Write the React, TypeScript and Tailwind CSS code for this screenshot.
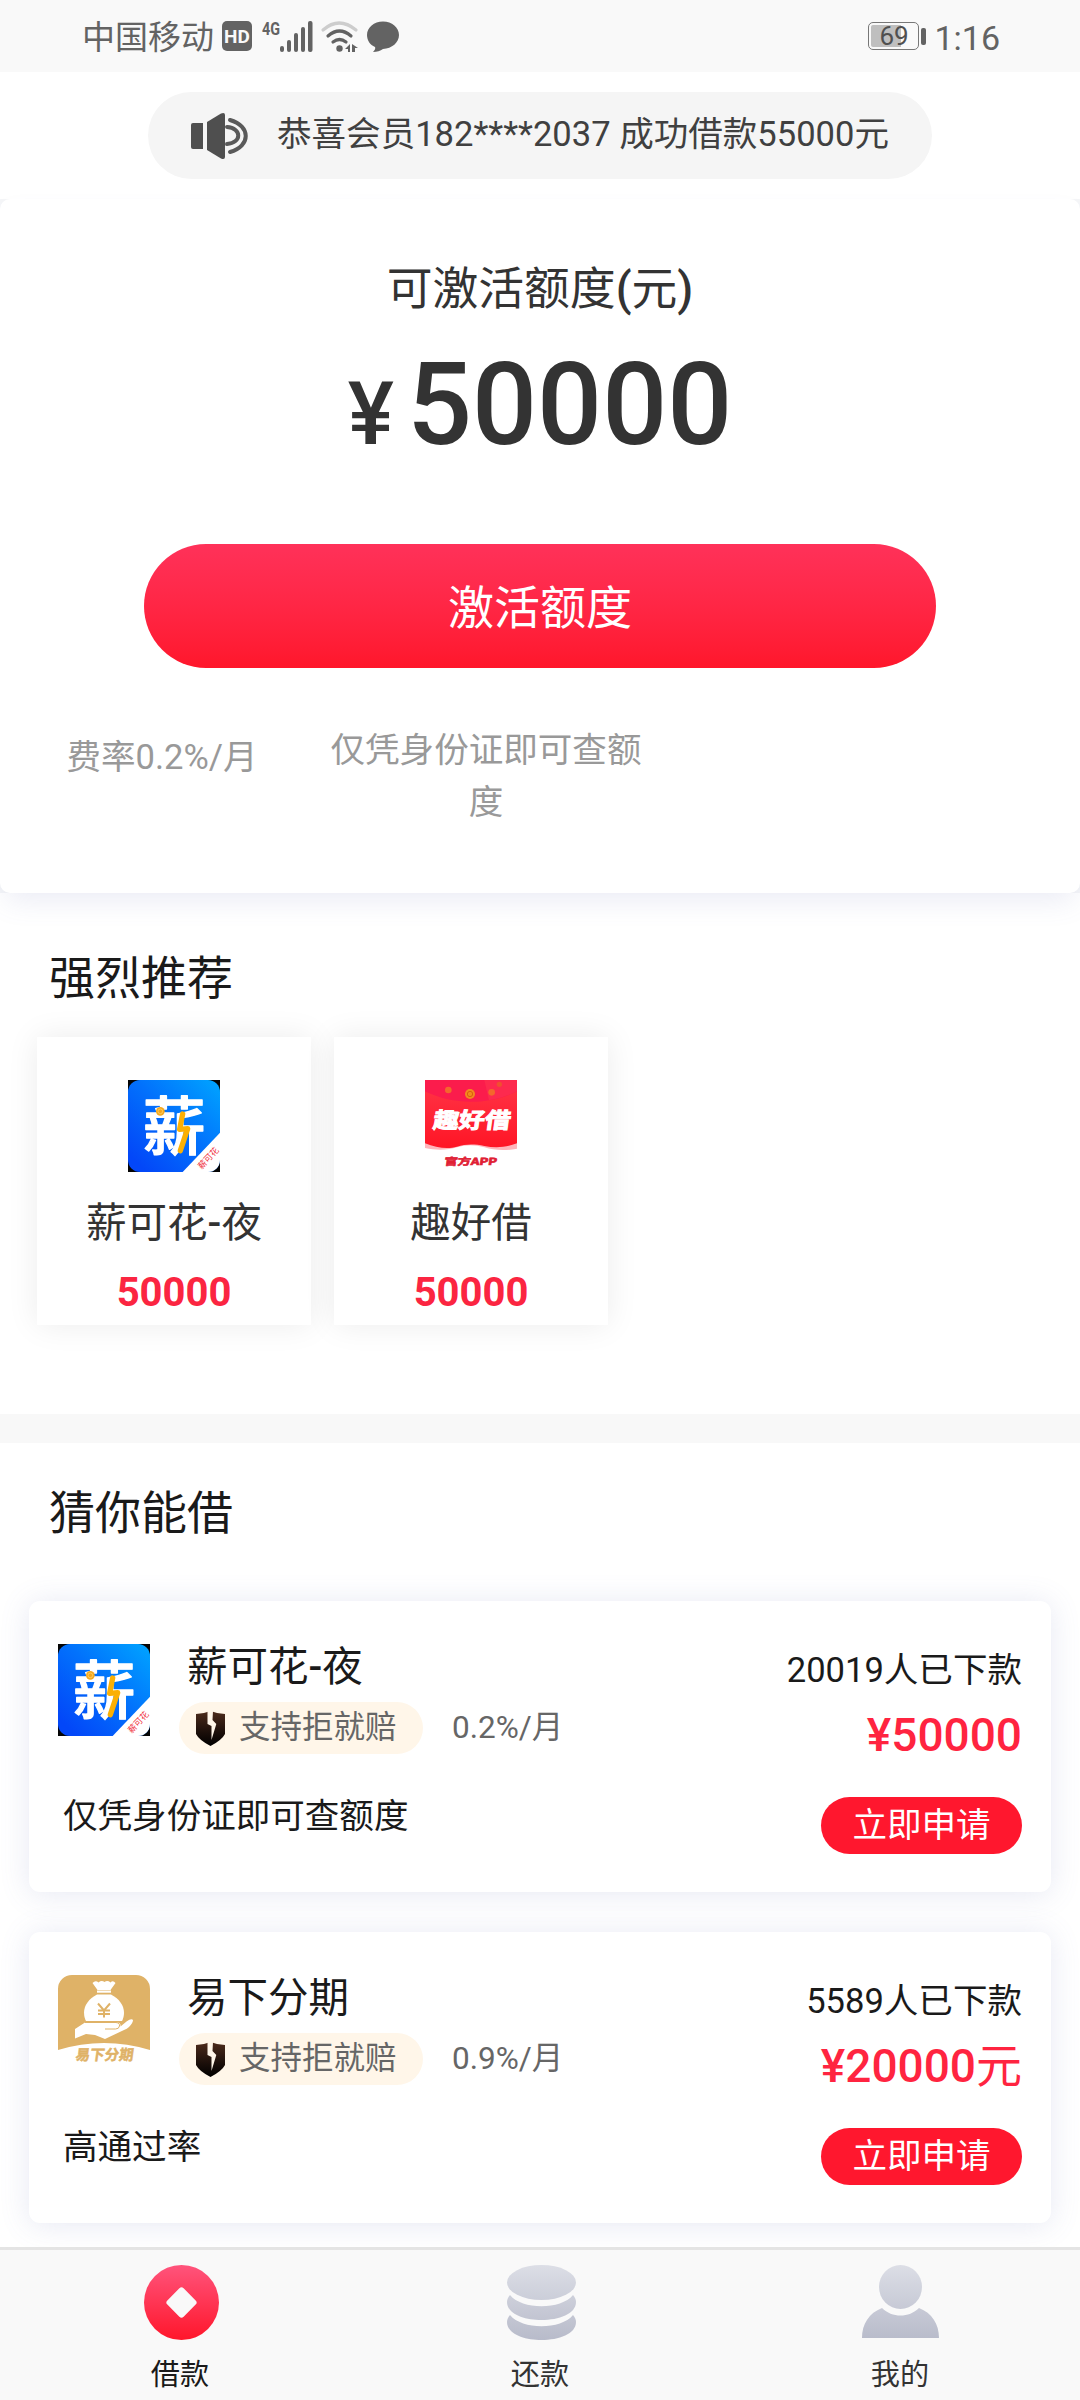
interface Loan {
  id: string
  name: string
  rate: string
  desc: string
  count: string
  amount: string
}

const loans: Loan[] = [
  { id: "xin", name: "薪可花-夜", rate: "0.2%/月", desc: "仅凭身份证即可查额度", count: "20019人已下款", amount: "¥50000" },
  { id: "yi", name: "易下分期", rate: "0.9%/月", desc: "高通过率", count: "5589人已下款", amount: "¥20000元" },
]

const recommended = [
  { id: "xin", name: "薪可花-夜", amount: "50000" },
  { id: "qu", name: "趣好借", amount: "50000" },
]

// Latin characters are set in medium weight, Chinese stays regular
function Mixed({ text }: { text: string }) {
  return (
    <>
      {text.split(/([\x20-\x7e¥]+)/).map((part, i) => (
        <span key={i} className={i % 2 ? "font-medium" : "font-normal"}>
          {part}
        </span>
      ))}
    </>
  )
}

function XinLogo() {
  return (
    <svg viewBox="0 0 276 276" className="block w-[92px] h-[92px] overflow-visible">
      <defs>
        <linearGradient id="xinBg" x1="1" y1="0" x2="0.1" y2="0.9">
          <stop offset="0" stopColor="#00a5ff" />
          <stop offset="0.5" stopColor="#0272fc" />
          <stop offset="1" stopColor="#0347f8" />
        </linearGradient>
        <clipPath id="xinClip">
          <rect width="276" height="276" rx="36" />
        </clipPath>
      </defs>
      <rect width="276" height="276" fill="#050505" />
      <g clipPath="url(#xinClip)">
        <rect width="276" height="276" fill="url(#xinBg)" />
        <path d="M276 158v118H164z" fill="#fff" />
      </g>
      <text
        x="138"
        y="207"
        fontSize="188"
        fontWeight="500"
        fill="#fff"
        stroke="#fff"
        strokeWidth="4"
        strokeLinejoin="round"
        textAnchor="middle"
        className="font-['Noto_Sans_CJK_SC',sans-serif]"
      >
        薪
      </text>
      <path d="M164 102l-9 46 24-2-22 66" fill="none" stroke="#fbb004" strokeWidth="16" strokeLinejoin="round" strokeLinecap="round" />
      <circle cx="97" cy="94" r="13" fill="#f5a81c" />
      <circle cx="97" cy="94" r="7" fill="none" stroke="#ffd978" strokeWidth="2" />
      <text
        transform="translate(221 269) rotate(-47)"
        fontSize="26"
        fill="#f0303c"
        className="font-['Noto_Sans_CJK_SC',sans-serif]"
      >
        薪可花
      </text>
    </svg>
  )
}

function QuLogo() {
  return (
    <svg viewBox="0 0 276 276" className="block w-[92px] h-[92px] overflow-visible">
      <defs>
        <linearGradient id="quBg" x1="0" y1="0" x2="0" y2="1">
          <stop offset="0" stopColor="#ff3548" />
          <stop offset="1" stopColor="#ff1525" />
        </linearGradient>
      </defs>
      <rect width="276" height="276" fill="#fff" />
      <path d="M0 186h276v20c-40 8-70 4-98-4s-56-8-82 0-60 10-96 2z" fill="#ffb5bb" />
      <path d="M0 0h276v190c-36 14-68 14-98 8s-56-6-82 2-62 4-96-10z" fill="url(#quBg)" />
      <path d="M0 0h276v34C190 76 86 76 0 34z" fill="#fb1c4c" />
      <path d="M178 0h98v34q-40 20-84 27z" fill="#fd2a4e" />
      <circle cx="135" cy="42" r="15" fill="#f28a1e" />
      <circle cx="135" cy="42" r="8" fill="none" stroke="#d9600f" strokeWidth="3" />
      <circle cx="70" cy="30" r="10" fill="#f4672c" />
      <circle cx="200" cy="37" r="10" fill="#f4672c" />
      <circle cx="223" cy="13" r="8" fill="#f0502f" />
      <text
        transform="translate(22 144) skewX(-8)"
        fontSize="65"
        fontWeight="700"
        textLength="232"
        lengthAdjust="spacingAndGlyphs"
        fill="#fff"
        stroke="#fff"
        strokeWidth="3"
        className="font-['Noto_Sans_CJK_SC',sans-serif]"
      >
        趣好借
      </text>
      <text
        transform="translate(57 254) skewX(-8)"
        fontSize="29"
        fontWeight="700"
        textLength="158"
        lengthAdjust="spacingAndGlyphs"
        fill="#e02034"
        stroke="#e02034"
        strokeWidth="2"
        className="font-['Noto_Sans_CJK_SC',sans-serif]"
      >
        官方APP
      </text>
    </svg>
  )
}

function YiLogo() {
  return (
    <svg viewBox="0 0 92 92" className="block w-[92px] h-[92px] overflow-visible">
      <path d="M14 0h64a14 14 0 0 1 14 14v61Q46 61 0 75V14A14 14 0 0 1 14 0z" fill="#dfb267" />
      <path d="M34.500 8q3-3 6-.5 3-2.500 6-.5 3-2 6 .5 2.500-2.500 5 .5l-5 7h-13z" fill="#fff" />
      <path d="M39 15.500h14v2.200H39z" fill="#fff" />
      <path d="M39 19.500h14c8 4 13 11 13 18 0 4-1 6.500-2 8.500H28c-1-2-2-4.500-2-8.500 0-7 5-14 13-18z" fill="#fff" />
      <path d="M17 54l10-6.500h32q4 0 3.500 4l6-5q5-3.500 6.500-1.500 0 3-4 7-2 2-5 3L47 64l-10-4-9-1-11 4.500z" fill="#fff" />
      <path d="M27 47.500h31q4 .5 3.500 3.500-.5 3-4 3H47" fill="none" stroke="#dfb267" strokeWidth="1" />
      <path d="M40 28.500l6 7 6-7M46 35v7.500M40 35.500h12M40 39h12" fill="none" stroke="#dfb267" strokeWidth="2" />
      <text
        transform="translate(17 85) skewX(-8)"
        fontSize="14.500"
        fontWeight="700"
        fill="#dfb267"
        stroke="#dfb267"
        strokeWidth="0.500"
        className="font-['Noto_Sans_CJK_SC',sans-serif]"
      >
        易下分期
      </text>
    </svg>
  )
}

function Logo({ id }: { id: string }) {
  if (id === "xin") return <XinLogo />
  if (id === "qu") return <QuLogo />
  return <YiLogo />
}

function ShieldIcon() {
  return (
    <svg viewBox="0 0 29 35" className="block w-[29px] h-[35px]">
      <defs>
        <linearGradient id="shield" x1="0" y1="0" x2="0" y2="1">
          <stop offset="0" stopColor="#4e2c1c" />
          <stop offset="0.6" stopColor="#1c0f0a" />
          <stop offset="1" stopColor="#000" />
        </linearGradient>
      </defs>
      <path d="M0 3q7 0 14.500-3Q22 3 29 3v20q-3 6-14.500 12Q3 29 0 23z" fill="url(#shield)" />
      <path d="M11.500 0h5.500l-.5 9 3.800 4-4.800 16v-14l-4-2z" fill="#fff6e9" />
    </svg>
  )
}

function StatusBar() {
  return (
    <div className="h-[72px] shrink-0 bg-[#f9f9f9] flex items-center pl-[82px] pr-[80px] text-[#636363]">
      <span className="text-[33px] leading-[44px] mt-[4px]">中国移动</span>
      <span className="ml-[8px] w-[30px] h-[30px] rounded-[5px] bg-[#636363] text-[#f9f9f9] text-[19px] leading-[31px] font-bold text-center">HD</span>
      <svg viewBox="0 0 140 32" className="ml-[8px] w-[140px] h-[32px] overflow-visible">
        <text x="2" y="15" fontSize="19" fontWeight="700" textLength="18" lengthAdjust="spacingAndGlyphs" fill="#636363">4G</text>
        <g fill="#636363">
          <rect x="20" y="26" width="4" height="6" rx="2" />
          <rect x="27" y="20" width="4" height="12" rx="2" />
          <rect x="34" y="13" width="4" height="19" rx="2" />
          <rect x="41" y="7" width="4" height="25" rx="2" />
          <rect x="48" y="1" width="4.500" height="31" rx="2" />
        </g>
        <g fill="none" strokeWidth="3.200" strokeLinecap="round">
          <path d="M63 10q16-14 33 0" stroke="#cdcdcd" />
          <path d="M68 16q11.500-10 23 0" stroke="#636363" />
          <path d="M73 22q6.500-5 13 0" stroke="#636363" />
        </g>
        <circle cx="79.500" cy="28.500" r="3.200" fill="#636363" />
        <path d="M90 24v8h-2v-3h-3zM92 24l6 4-3 0v4h-3z" fill="#636363" />
        <path d="M123 1.500c9 0 16 6 16 13.500s-7 13.500-16 14q-4 3-10 3 3-3 2-5c-5-2-8-7-8-12 0-7.500 7-13.500 16-13.500z" fill="#636363" />
      </svg>
      <div className="ml-auto flex items-center">
        <div className="w-[51px] h-[28px] rounded-[5px] border border-[#777] p-[2px]">
          <div className="w-[30px] h-full bg-[#bfbfbf] rounded-l-[2px] flex justify-start">
            <span className="pl-[8px] text-[26px] leading-[22px] text-[#505050]">69</span>
          </div>
        </div>
        <div className="ml-[2px] w-[5px] h-[17px] rounded-[2px] bg-[#636363]" />
        <span className="ml-[8px] text-[34px] leading-[40px] mt-[3px]">1:16</span>
      </div>
    </div>
  )
}

function SpeakerIcon() {
  return (
    <svg viewBox="0 0 57 46" className="block w-[57px] h-[46px]">
      <path d="M2 10h10v26H2q-2 0-2-2V12q0-2 2-2z" fill="#4f4f4f" />
      <path d="M16 9L30 .5q4-1.500 4 1.500v42q0 3-4 1.500L16 37z" fill="#4f4f4f" />
      <g fill="none" stroke="#5a5a5a" strokeWidth="4" strokeLinecap="round">
        <path d="M36 14c15 1 15 16 0 17" />
        <path d="M39 7c21 6 21 26 0 32" />
      </g>
    </svg>
  )
}

function LoanCard({ loan }: { loan: Loan }) {
  return (
    <div className="h-[291px] px-[29px] rounded-[11px] bg-white shadow-[0_2px_30px_rgba(100,110,180,0.16)] flex justify-between">
      <div className="pt-[37px]">
        <div className="flex">
          <div className="mt-[6px]">
            <Logo id={loan.id} />
          </div>
          <div className="ml-[29px]">
            <h3 className="pl-[8px] h-[58px] text-[40.500px] leading-[58px] text-[#1a1a1a]">
              <Mixed text={loan.name} />
            </h3>
            <div className="mt-[6px] flex items-center">
              <div className="w-[244px] h-[52px] pl-[17px] rounded-full bg-[#fff6e9] flex items-center">
                <ShieldIcon />
                <span className="ml-[14px] text-[31.500px] leading-[52px] text-[#666]">支持拒就赔</span>
              </div>
              <span className="ml-[29px] text-[31.500px] leading-[52px] text-[#666]">{loan.rate}</span>
            </div>
          </div>
        </div>
        <p className="mt-[36px] pl-[5px] text-[34.560px] leading-[52px] text-[#1a1a1a]">{loan.desc}</p>
      </div>
      <div className="pt-[43px] flex flex-col items-end">
        <p className="text-[34.560px] leading-[52px] text-[#1a1a1a]">{loan.count}</p>
        <p className="mt-[11px] text-[46px] leading-[56px] text-[#ff2440]">
          <Mixed text={loan.amount} />
        </p>
        <button type="button" className="mt-[34px] w-[201px] h-[57px] rounded-full bg-[#ff172e] text-white text-[34.560px] leading-[57px]">
          立即申请
        </button>
      </div>
    </div>
  )
}

function TabBar() {
  return (
    <nav className="h-[153px] shrink-0 border-t-[3px] border-[#e4e4e4] bg-[#f9f9f9] flex text-[29.160px] text-[#333]">
      <div className="flex-1 pt-[15px] flex flex-col items-center text-[#1a1a1a]">
        <svg viewBox="0 0 75 75" className="ml-[3px] w-[75px] h-[75px]">
          <defs>
            <linearGradient id="tabRed" x1="0" y1="0" x2="0" y2="1">
              <stop offset="0" stopColor="#ff547c" />
              <stop offset="1" stopColor="#ff162b" />
            </linearGradient>
          </defs>
          <circle cx="37.500" cy="37.500" r="37.500" fill="url(#tabRed)" />
          <rect x="26" y="26" width="23" height="23" rx="3" transform="rotate(45 37.500 37.500)" fill="#f9f9f9" />
        </svg>
        <span className="mt-[13px] leading-[44px]">借款</span>
      </div>
      <div className="flex-1 pt-[15px] flex flex-col items-center">
        <svg viewBox="0 0 69 75" className="ml-[3px] w-[69px] h-[75px]">
          <defs>
            <linearGradient id="tabGrey" gradientUnits="userSpaceOnUse" x1="0" y1="0" x2="0" y2="75">
              <stop offset="0" stopColor="#dcdee6" />
              <stop offset="1" stopColor="#b8bbca" />
            </linearGradient>
          </defs>
          <g fill="url(#tabGrey)">
            <ellipse cx="34.500" cy="17.500" rx="34.500" ry="17.500" />
            <path d="M3 30c12 15 51 15 63 0 2 2 3 5 3 7 0 24-69 24-69 0 0-2 1-5 3-7z" />
            <path d="M3 50c12 15 51 15 63 0 2 2 3 5 3 7 0 24-69 24-69 0 0-2 1-5 3-7z" />
          </g>
        </svg>
        <span className="mt-[13px] leading-[44px]">还款</span>
      </div>
      <div className="flex-1 pt-[15px] flex flex-col items-center">
        <svg viewBox="0 0 77 75" className="w-[77px] h-[75px]">
          <g fill="url(#tabGrey)">
            <ellipse cx="38.500" cy="22" rx="21.500" ry="22" />
            <path d="M20 43c10 10 27 10 37 0 13 5 20 16 20 30H0c0-14 7-25 20-30z" />
          </g>
        </svg>
        <span className="mt-[13px] leading-[44px]">我的</span>
      </div>
    </nav>
  )
}

export default function App() {
  return (
    <div className="w-[1080px] h-[2400px] overflow-hidden bg-white flex flex-col font-[Roboto,'Noto_Sans_CJK_SC',sans-serif]">
      <StatusBar />

      <div className="flex-1 min-h-0">
        <div className="py-5">
          <div className="mx-auto w-[784px] h-[87px] pl-[43px] rounded-full bg-[#f5f5f5] flex items-center">
            <SpeakerIcon />
            <span className="ml-[29px] -mt-[3px] text-[34.560px] leading-[52px] text-[#404040]">恭喜会员182****2037 成功借款55000元</span>
          </div>
        </div>

        <div className="bg-[#f5f6f8]">
          <div className="h-[694px] pt-[57px] rounded-[10px] bg-white shadow-[0_14px_28px_-6px_rgba(100,110,180,0.13)]">
            <h1 className="text-center text-[45.800px] leading-[68px] text-[#333]">
              <Mixed text="可激活额度(元)" />
            </h1>
            <div className="mt-[21px] h-[120px] flex justify-center items-baseline font-medium text-[#333]">
              <span className="text-[87px] leading-[120px]">¥</span>
              <span className="ml-[13px] text-[114.500px] leading-[120px]">50000</span>
            </div>
            <button type="button" className="mt-[79px] mx-auto block w-[792px] h-[124px] pt-[4px] rounded-full bg-linear-to-b from-[#ff3159] to-[#ff162b] text-white text-[46px] leading-[120px]">
              激活额度
            </button>
            <div className="mt-[56px] flex text-[34.560px] leading-[52px] text-center text-[#999]">
              <p className="w-[321px] pt-[7px] pl-[3px]">费率0.2%/月</p>
              <p className="w-[330px]">仅凭身份证即可查额度</p>
            </div>
          </div>
        </div>

        <section className="h-[521px] pt-[51px] px-[37px]">
          <h2 className="pl-[12px] text-[46px] leading-[68px] text-[#1a1a1a]">强烈推荐</h2>
          <div className="mt-[25px] flex gap-[23px]">
            {recommended.map((r) => (
              <div key={r.id} className="w-[274px] h-[288px] pt-[43px] bg-white shadow-[0_0_30px_rgba(0,0,0,0.08)] flex flex-col items-center">
                <Logo id={r.id} />
                <p className="mt-[21px] text-[40.500px] leading-[60px] text-[#333]">
                  <Mixed text={r.name} />
                </p>
                <p className="mt-[15px] text-[40px] leading-[50px] font-bold text-[#fb2541]">{r.amount}</p>
              </div>
            ))}
          </div>
        </section>

        <div className="h-[29px] bg-[#f8f8f8]" />

        <section className="pt-[36px] px-[29px]">
          <h2 className="pl-[20px] text-[46px] leading-[68px] text-[#1a1a1a]">猜你能借</h2>
          <div className="mt-[54px] flex flex-col gap-10">
            {loans.map((l) => (
              <LoanCard key={l.id} loan={l} />
            ))}
          </div>
        </section>
      </div>

      <TabBar />
    </div>
  )
}
